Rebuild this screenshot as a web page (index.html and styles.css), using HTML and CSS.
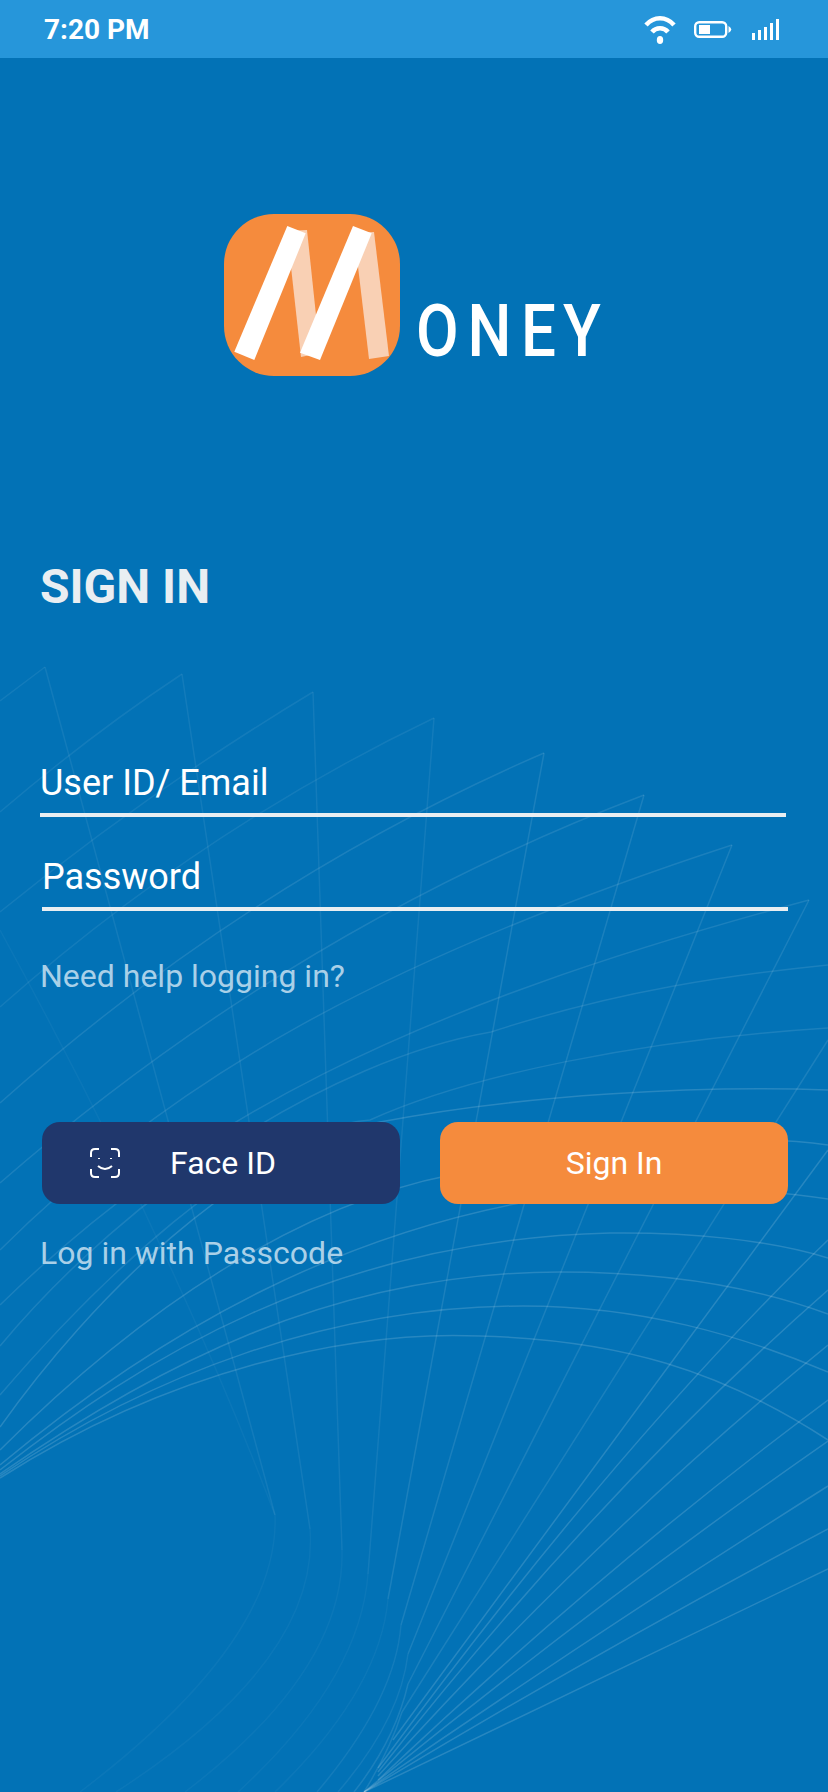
FILE: index.html
```html
<!DOCTYPE html>
<html lang="en">
<head>
  <meta charset="UTF-8" />
  <meta name="viewport" content="width=device-width, initial-scale=1.0" />
  <title>Money - Sign In</title>
  <link rel="stylesheet" href="styles.css">
</head>
<body>
  <svg class="bg-lines" viewBox="0 0 828 1792" aria-hidden="true">
    <g class="lines-fade">
      <path d="M0 930 Q170 1240 275 1515" />
      <path d="M275 1515 Q280 1640 80 1792" />
      <path d="M310 1529 Q320 1660 116 1792" />
      <path d="M342 1550 Q345 1670 185 1792" />
      <path d="M368 1574 Q360 1680 238 1792" />
      <path d="M388 1599 Q380 1690 275 1792" />
    </g>
    <g class="lines-faint">
      <path d="M0 701 L45 667" />
      <path d="M0 812 Q90 735 182 674" />
      <path d="M0 912 Q150 790 313 692" />
      <path d="M0 1007 Q200 830 434 718" />
      <path d="M45 667 L275 1515" />
      <path d="M182 674 L310 1529" />
      <path d="M313 692 L342 1550" />
      <path d="M434 718 L368 1574" />
      <path d="M401 1625 Q395 1700 317 1792" />
      <path d="M408 1654 Q400 1720 338 1792" />
    </g>
    <g class="lines-soft">
      <path d="M0 1103 Q250 880 544 753" />
      <path d="M0 1183 Q290 930 644 795" />
      <path d="M0 1250 C170 1080 380 960 732 845" />
      <path d="M0 1305 C190 1120 400 1010 809 900" />
      <path d="M0 1346 C130 1190 330 1060 491 1032 C620 990 730 975 828 965" />
      <path d="M0 1395 C90 1290 250 1130 370 1120 C470 1075 640 1040 828 1028" />
      <path d="M544 753 L388 1599" />
      <path d="M644 795 L401 1625" />
      <path d="M732 845 L408 1654" />
      <path d="M809 900 L408 1684" />
      <path d="M828 1040 L402 1712" />
      <path d="M408 1684 Q395 1740 354 1792" />
      <path d="M402 1712 Q390 1750 364 1792" />
    </g>
    <g class="lines-bright">
      <path d="M0 1427 C90 1300 240 1150 380 1122 C520 1095 700 1085 828 1090" />
      <path d="M0 1450 C130 1320 300 1195 480 1170 C620 1150 730 1130 828 1145" />
      <path d="M0 1465 C150 1340 350 1215 610 1190 C690 1185 770 1190 828 1199" />
      <path d="M0 1470 C140 1360 330 1240 610 1233 C690 1232 770 1240 828 1258" />
      <path d="M0 1474 C150 1370 330 1272 560 1272 C660 1272 750 1285 828 1314" />
      <path d="M0 1476 C150 1375 330 1306 523 1306 C640 1306 740 1335 828 1372" />
      <path d="M0 1478 C170 1370 350 1330 480 1336 C620 1340 720 1370 828 1440" />
      <path d="M393 1740 L828 1150" />
      <path d="M378 1768 Q620 1440 828 1240" />
      <path d="M378 1772 Q600 1490 828 1290" />
      <path d="M378 1776 Q600 1530 828 1345" />
      <path d="M378 1780 Q600 1570 828 1400" />
      <path d="M364 1792 Q600 1600 828 1441" />
      <path d="M364 1792 Q600 1630 828 1486" />
      <path d="M364 1792 Q600 1650 828 1529" />
      <path d="M364 1792 L828 1569" />
    </g>
  </svg>

  <div class="status-bar">
    <span class="status-time">7:20 PM</span>
    <div class="status-icons">
      <svg class="icon-wifi" viewBox="0 0 32 30" aria-hidden="true">
        <path d="M2 11 C10 2 22 2 30 11" />
        <path d="M8 18 C12 13 20 13 24 18" />
        <ellipse cx="16" cy="26" rx="3.2" ry="4" />
      </svg>
      <svg class="icon-battery" viewBox="0 0 38 17" aria-hidden="true">
        <rect x="1.2" y="1.2" width="31" height="14.6" rx="4" />
        <rect class="fill" x="5" y="4" width="11" height="9" />
        <path class="fill" d="M34.5 5 Q40 8.5 34.5 12 Z" />
      </svg>
      <svg class="icon-signal" viewBox="0 0 27 21" aria-hidden="true">
        <rect x="0" y="14" width="3" height="7" />
        <rect x="6" y="11" width="3" height="10" />
        <rect x="12" y="8" width="3" height="13" />
        <rect x="18" y="4" width="3" height="17" />
        <rect x="24" y="0" width="3" height="21" />
      </svg>
    </div>
  </div>

  <div class="logo-wrap">
    <svg class="logo" viewBox="0 0 382 162" role="img" aria-label="Money">
      <rect class="logo-bg" width="176" height="162" rx="50" />
      <polygon class="logo-pale" points="63,17 83,16 96,139 77,143" />
      <polygon class="logo-pale" points="130,19 150,18 165,142 145,145" />
      <polygon class="logo-white" points="63.3,12 81.7,19.3 30.3,146 10.3,137.7" />
      <polygon class="logo-white" points="129,12 147.7,19.3 96,146 76,138.7" />
      <text class="logo-text" x="0 60 122 171" y="0" transform="translate(192 142) scale(0.86 1)">ONEY</text>
    </svg>
  </div>

  <div class="form">
    <h1 class="title">SIGN IN</h1>
    <div class="field">User ID/ Email</div>
    <div class="field field-password">Password</div>
    <a class="help-link">Need help logging in?</a>
    <div class="buttons">
      <button class="btn btn-face">
        <svg class="icon-face" viewBox="0 0 30 30" aria-hidden="true">
          <path d="M1 9 V5 Q1 1 5 1 H9 M21 1 H25 Q29 1 29 5 V9 M29 21 V25 Q29 29 25 29 H21 M9 29 H5 Q1 29 1 25 V21" />
          <path d="M8 18 Q15 24 22 18" />
          <path d="M9 10 V11 M21 10 V11" />
        </svg>
        <span>Face ID</span>
      </button>
      <button class="btn btn-sign">Sign In</button>
    </div>
    <a class="help-link passcode-link">Log in with Passcode</a>
  </div>
</body>
</html>
```

FILE: styles.css
```css
body {
  margin: 0;
  width: 828px;
  height: 1792px;
  background: #0272b6;
  position: relative;
  overflow: hidden;
  font-family: Roboto, Arial, sans-serif;
  color: white;
}
.bg-lines {
  position: absolute;
  top: 0;
  left: 0;
  width: 828px;
  height: 1792px;
}
.bg-lines path {
  fill: none;
  stroke: white;
  stroke-width: 1.5;
}
.lines-fade path {
  opacity: 0.04;
}
.lines-faint path {
  opacity: 0.07;
}
.lines-soft path {
  opacity: 0.1;
}
.lines-bright path {
  opacity: 0.15;
}
.status-bar {
  position: relative;
  height: 58px;
  background: #2696da;
  display: flex;
  align-items: center;
  justify-content: space-between;
  padding: 0 49px 0 44px;
}
.status-time {
  font-size: 28px;
  font-weight: 700;
}
.status-icons {
  display: flex;
  align-items: center;
  gap: 18px;
}
.icon-wifi {
  width: 32px;
  height: 30px;
  fill: white;
}
.icon-wifi path {
  fill: none;
  stroke: white;
  stroke-width: 4.5;
}
.icon-battery {
  width: 38px;
  height: 17px;
  margin-right: 2px;
}
.icon-battery rect {
  fill: none;
  stroke: white;
  stroke-width: 2.4;
}
.icon-battery .fill {
  fill: white;
  stroke: none;
}
.icon-signal {
  width: 27px;
  height: 21px;
  fill: white;
}
.logo-wrap {
  position: relative;
  padding: 156px 0 0 224px;
}
.logo {
  display: block;
  width: 382px;
  height: 162px;
}
.logo-bg {
  fill: #f58b3d;
}
.logo-pale {
  fill: #f9d0b4;
}
.logo-white {
  fill: white;
}
.logo-text {
  fill: white;
  font-size: 72px;
  font-weight: 500;
}
.form {
  position: relative;
  padding: 0 40px;
}
.title {
  margin: 184px 0 0 0;
  font-size: 48px;
  line-height: 54px;
  font-weight: 700;
  color: #e9eef2;
}
.field {
  margin: 148px 2px 0 0;
  padding: 0 0 9px 0;
  font-size: 36px;
  line-height: 42px;
  border-bottom: 4px solid #e9eef2;
}
.field-password {
  margin: 39px 0 0 2px;
}
.help-link {
  display: block;
  margin: 46px 0 0 0;
  font-size: 32px;
  line-height: 38px;
  color: #a9d0e8;
}
.buttons {
  display: flex;
  gap: 40px;
  margin: 127px 0 0 2px;
}
.btn {
  height: 82px;
  border: none;
  border-radius: 18px;
  color: white;
  font-family: inherit;
  font-size: 32px;
  padding: 0;
}
.btn-face {
  width: 358px;
  background: #20376c;
  display: flex;
  align-items: center;
  gap: 50px;
  padding-left: 48px;
}
.btn-sign {
  width: 348px;
  background: #f58b3d;
}
.icon-face {
  width: 30px;
  height: 30px;
  fill: none;
  stroke: white;
  stroke-width: 2;
}
.passcode-link {
  margin-top: 30px;
}
```
